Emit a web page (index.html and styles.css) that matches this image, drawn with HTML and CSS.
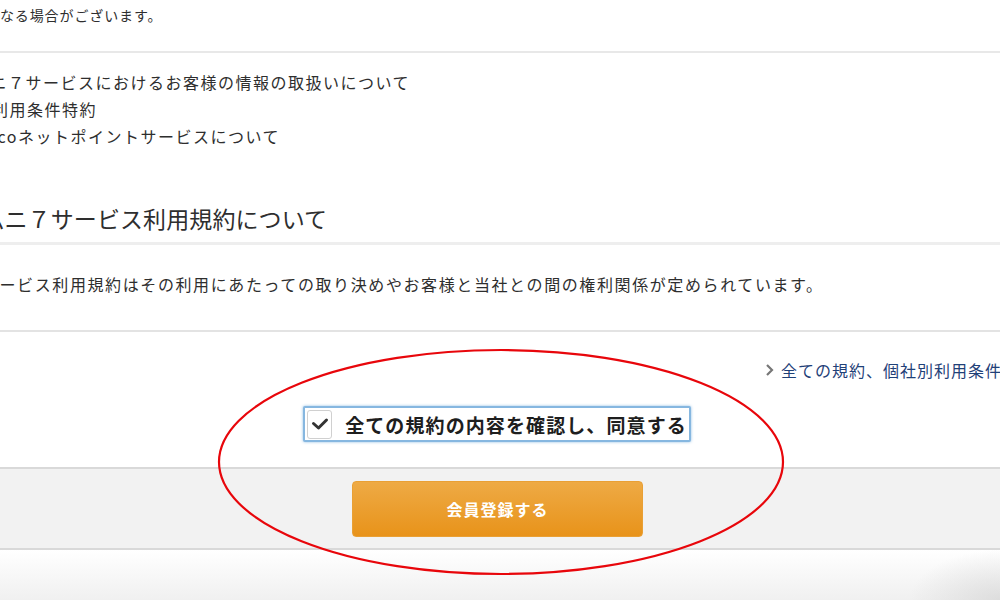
FILE: index.html
```html
<!DOCTYPE html>
<html lang="ja">
<head>
<meta charset="utf-8">
<title>会員登録</title>
<link rel="stylesheet" href="styles.css">
</head>
<body>
<div class="page">
  <div class="sec-top">
    <p class="note">異なる場合がございます。</p>
  </div>
  <ul class="terms-list">
    <li class="item1">オムニ７サービスにおけるお客様の情報の取扱いについて</li>
    <li class="item2">個社利用条件特約</li>
    <li class="item3">nanacoネットポイントサービスについて</li>
  </ul>
  <h2 class="heading">オムニ７サービス利用規約について</h2>
  <div class="sec-desc">
    <p class="desc">オムニ７サービス利用規約はその利用にあたっての取り決めやお客様と当社との間の権利関係が定められています。</p>
  </div>
  <div class="link-row">
    <a class="all-link" href="#"><span class="chev"><svg width="9" height="14" viewBox="0 0 9 14"><polyline points="2,2 7,7 2,12" fill="none" stroke="#777" stroke-width="2.2"/></svg></span>全ての規約、個社別利用条件一覧</a>
  </div>
  <div class="agree-row">
    <label class="agree">
      <span class="box"><svg width="18" height="14" viewBox="0 0 18 14"><polyline points="2.5,6.5 7.5,11 15.5,3" fill="none" stroke="#333" stroke-width="3" stroke-linecap="round" stroke-linejoin="round"/></svg></span>
      <span class="agree-text">全ての規約の内容を確認し、同意する</span>
    </label>
  </div>
  <div class="band">
    <button class="submit" type="button">会員登録する</button>
  </div>
  <div class="foot"></div>
</div>
<svg class="mark" width="1000" height="600" viewBox="0 0 1000 600"><ellipse cx="501" cy="462" rx="282" ry="112" fill="none" stroke="#e8060b" stroke-width="2.2"/></svg>
</body>
</html>
```
FILE: styles.css
```css
html, body {
  margin: 0;
  padding: 0;
}
body {
  width: 1000px;
  height: 600px;
  overflow: hidden;
  position: relative;
  background: #fff;
  font-family: "Noto Sans CJK JP", "Noto Sans", sans-serif;
  color: #2e2e2e;
}
.page {
  width: 1000px;
}
.sec-top {
  padding-top: 5px;
  padding-bottom: 26px;
  border-bottom: 2px solid #e8e8e8;
}
.note {
  margin: 0 0 0 -15px;
  font-size: 14px;
  letter-spacing: 0.9px;
  line-height: 20px;
  white-space: nowrap;
}
.terms-list {
  list-style: none;
  margin: 16px 0 0 0;
  padding: 0;
  font-size: 16px;
  letter-spacing: 1.5px;
  line-height: 27px;
  white-space: nowrap;
}
.item1 { margin-left: -44px; }
.item2 { margin-left: -43px; }
.item3 { margin-left: -46px; }
.heading {
  margin: 52px 0 0 0;
  padding: 0 0 8px 0;
  border-bottom: 3px solid #eeeeee;
  font-size: 23px;
  font-weight: normal;
  letter-spacing: 0.1px;
  line-height: 32px;
  white-space: nowrap;
  text-indent: -41px;
}
.sec-desc {
  padding-top: 26px;
  padding-bottom: 33px;
  border-bottom: 2px solid #e3e3e3;
}
.desc {
  margin: 0 0 0 -88px;
  font-size: 16px;
  letter-spacing: 1.6px;
  line-height: 26px;
  white-space: nowrap;
}
.link-row {
  margin-top: 26px;
  padding-left: 765px;
  line-height: 24px;
  white-space: nowrap;
}
.all-link {
  display: inline-flex;
  align-items: center;
  color: #1f4178;
  text-decoration: none;
  font-size: 16px;
  letter-spacing: 1px;
}
.chev {
  display: inline-flex;
  margin-right: 7px;
}
.agree-row {
  margin-top: 24px;
  display: flex;
  justify-content: center;
  padding-right: 6px;
}
.agree {
  display: flex;
  align-items: center;
  height: 32px;
  padding: 0 2px 0 2px;
  border: 2px solid #86b7e0;
  box-shadow: 0 0 3px rgba(110, 170, 220, 0.8);
  background: #fff;
  border-radius: 2px;
}
.box {
  display: flex;
  align-items: center;
  justify-content: center;
  width: 25px;
  height: 29px;
  border: 1px solid #d0d0d0;
  border-radius: 3px;
  background: #fff;
  box-sizing: border-box;
  margin-right: 13px;
}
.agree-text {
  font-size: 19px;
  font-weight: bold;
  letter-spacing: 1.1px;
  color: #1e1e1e;
  white-space: nowrap;
}
.band {
  margin-top: 25px;
  border-top: 2px solid #d9d9d9;
  border-bottom: 2px solid #d9d9d9;
  background: #f2f2f2;
  padding: 12px 0 11px 0;
  display: flex;
  justify-content: center;
  padding-right: 5px;
}
.submit {
  width: 291px;
  height: 56px;
  border: 1px solid #e9a035;
  border-radius: 4px;
  background: linear-gradient(to bottom, #eeaa45, #e8931a);
  color: #fff;
  font-family: "Noto Sans CJK JP", "Noto Sans", sans-serif;
  font-size: 16px;
  font-weight: bold;
  letter-spacing: 1px;
  padding: 0;
}
.foot {
  height: 50px;
  background:
    radial-gradient(ellipse 90px 50px at 100% 100%, rgba(205, 205, 205, 0.55), rgba(230, 230, 230, 0) 100%),
    linear-gradient(to bottom, #ffffff, #f0f0f0);
}
.mark {
  position: absolute;
  left: 0;
  top: 0;
  pointer-events: none;
}
```
